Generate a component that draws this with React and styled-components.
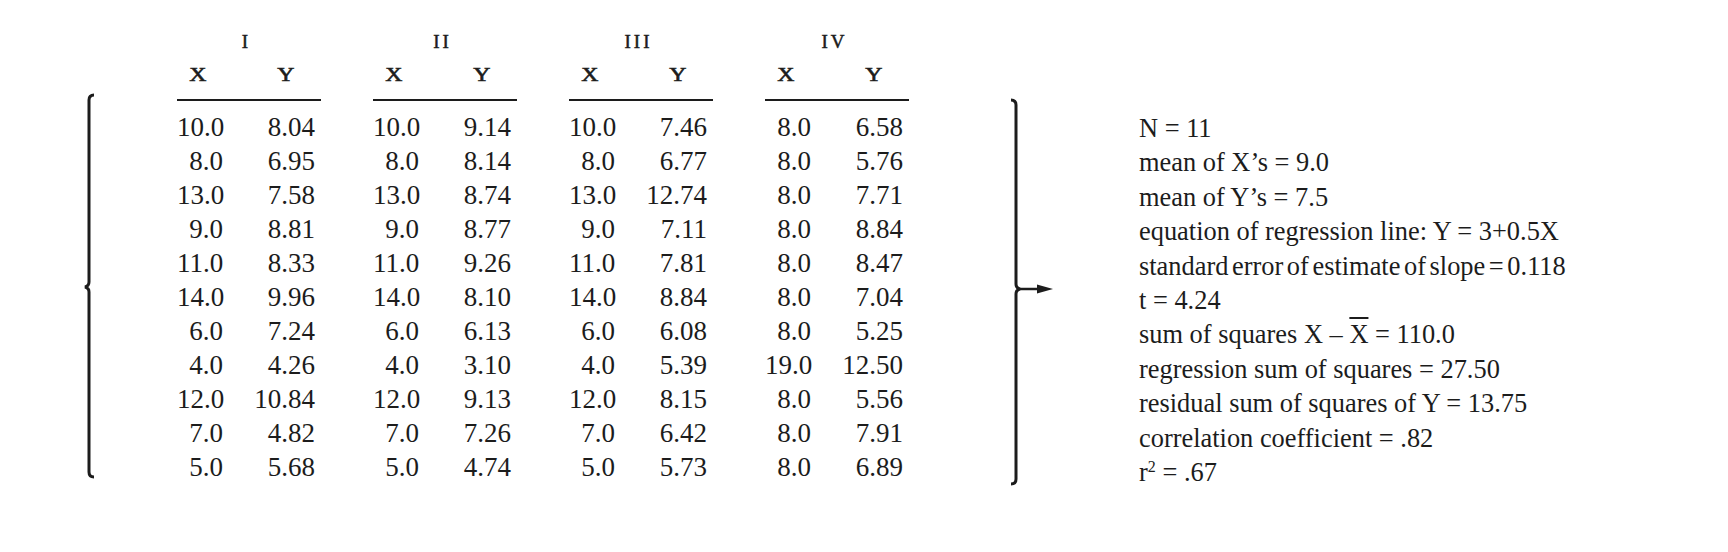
import React from 'react'
import styled, { createGlobalStyle } from 'styled-components'

const GlobalStyle = createGlobalStyle`
  html, body {
    margin: 0;
    padding: 0;
    background: #ffffff;
  }
  body {
    font-family: "Liberation Serif", "Times New Roman", serif;
    color: #1c1c1c;
  }
`

const groups = [
  {
    name: 'I',
    x: ['10.0', '8.0', '13.0', '9.0', '11.0', '14.0', '6.0', '4.0', '12.0', '7.0', '5.0'],
    y: ['8.04', '6.95', '7.58', '8.81', '8.33', '9.96', '7.24', '4.26', '10.84', '4.82', '5.68'],
  },
  {
    name: 'II',
    x: ['10.0', '8.0', '13.0', '9.0', '11.0', '14.0', '6.0', '4.0', '12.0', '7.0', '5.0'],
    y: ['9.14', '8.14', '8.74', '8.77', '9.26', '8.10', '6.13', '3.10', '9.13', '7.26', '4.74'],
  },
  {
    name: 'III',
    x: ['10.0', '8.0', '13.0', '9.0', '11.0', '14.0', '6.0', '4.0', '12.0', '7.0', '5.0'],
    y: ['7.46', '6.77', '12.74', '7.11', '7.81', '8.84', '6.08', '5.39', '8.15', '6.42', '5.73'],
  },
  {
    name: 'IV',
    x: ['8.0', '8.0', '8.0', '8.0', '8.0', '8.0', '8.0', '19.0', '8.0', '8.0', '8.0'],
    y: ['6.58', '5.76', '7.71', '8.84', '8.47', '7.04', '5.25', '12.50', '5.56', '7.91', '6.89'],
  },
]

const Page = styled.div`
  display: flex;
  align-items: flex-start;
  padding: 30px 0 0 80px;
  width: 1728px;
  height: 552px;
  box-sizing: border-box;
`

const BraceSvg = styled.svg`
  flex: none;
  margin-top: ${p => p.$top}px;
  margin-left: ${p => p.$left || 0}px;
`

const Table = styled.div`
  display: flex;
  gap: 52px;
  margin-left: 81px;
`

const Group = styled.div`
  width: 144px;
  display: flex;
  flex-direction: column;
`

const Roman = styled.div`
  height: 24px;
  line-height: 24px;
  text-align: center;
  font-size: 19px;
  letter-spacing: 3px;
  padding-left: 3px;
  margin-left: -8px;
  -webkit-text-stroke: 0.5px #1c1c1c;
`

const HeadRow = styled.div`
  display: grid;
  grid-template-columns: 46px 1fr;
  margin-top: 9px;
  height: 24px;
  line-height: 24px;
  padding-bottom: 12px;
  border-bottom: 2px solid #1c1c1c;
  font-size: 19px;
`

const HeadCell = styled.span`
  text-align: ${p => (p.$right ? 'right' : 'center')};
  padding-right: ${p => (p.$right ? '28px' : '0')};
  margin-left: ${p => (p.$right ? '0' : '-4px')};
`

const Letter = styled.span`
  display: inline-block;
  transform: scaleX(1.25);
  -webkit-text-stroke: 0.6px #1c1c1c;
`

const Rows = styled.div`
  margin-top: 9px;
`

const DataRow = styled.div`
  display: grid;
  grid-template-columns: 46px 1fr;
  height: 34px;
  line-height: 34px;
  font-size: 27px;
`

const Cell = styled.span`
  text-align: right;
  padding-right: ${p => (p.$y ? '6px' : '0')};
  white-space: nowrap;
`

const Stats = styled.div`
  margin-left: 83px;
  margin-top: 81px;
  font-size: 26.4px;
  line-height: 34.4px;
`

const StatLine = styled.div`
  white-space: nowrap;
  word-spacing: ${p => (p.$tight ? '-3px' : '0')};
`

const Bar = styled.span`
  text-decoration: overline;
  text-decoration-thickness: 2px;
`

const Sup = styled.sup`
  font-size: 16px;
  vertical-align: 9px;
  line-height: 0;
`

const LeftBrace = () => (
  <BraceSvg $top={63} width="16" height="386" viewBox="0 0 16 386">
    <path
      d="M14 2 Q9 2 9 7 L9 189 Q9 193 5 194 Q9 195 9 199 L9 379 Q9 384 14 384"
      fill="none"
      stroke="#1c1c1c"
      strokeWidth="3"
    />
  </BraceSvg>
)

const RightBrace = () => (
  <BraceSvg $top={68} $left={95} width="52" height="388" viewBox="0 0 52 388">
    <path
      d="M7 2 Q12 2 12 7 L12 186 Q12 190 16 191 Q12 192 12 196 L12 381 Q12 386 7 386"
      fill="none"
      stroke="#1c1c1c"
      strokeWidth="3"
    />
    <line x1="16" y1="191" x2="38" y2="191" stroke="#1c1c1c" strokeWidth="2.5" />
    <polygon points="33,186.5 49,191 33,195.5" fill="#1c1c1c" />
  </BraceSvg>
)

export default function App() {
  return (
    <>
      <GlobalStyle />
      <Page>
        <LeftBrace />
        <Table>
          {groups.map(g => (
            <Group key={g.name}>
              <Roman>{g.name}</Roman>
              <HeadRow>
                <HeadCell><Letter>X</Letter></HeadCell>
                <HeadCell $right><Letter>Y</Letter></HeadCell>
              </HeadRow>
              <Rows>
                {g.x.map((xv, i) => (
                  <DataRow key={i}>
                    <Cell>{xv}</Cell>
                    <Cell $y>{g.y[i]}</Cell>
                  </DataRow>
                ))}
              </Rows>
            </Group>
          ))}
        </Table>
        <RightBrace />
        <Stats>
          <StatLine>N = 11</StatLine>
          <StatLine>mean of X’s = 9.0</StatLine>
          <StatLine>mean of Y’s = 7.5</StatLine>
          <StatLine>equation of regression line: Y = 3+0.5X</StatLine>
          <StatLine $tight>standard error of estimate of slope = 0.118</StatLine>
          <StatLine>t = 4.24</StatLine>
          <StatLine>sum of squares X – <Bar>X</Bar> = 110.0</StatLine>
          <StatLine>regression sum of squares = 27.50</StatLine>
          <StatLine>residual sum of squares of Y = 13.75</StatLine>
          <StatLine>correlation coefficient = .82</StatLine>
          <StatLine>r<Sup>2</Sup> = .67</StatLine>
        </Stats>
      </Page>
    </>
  )
}
